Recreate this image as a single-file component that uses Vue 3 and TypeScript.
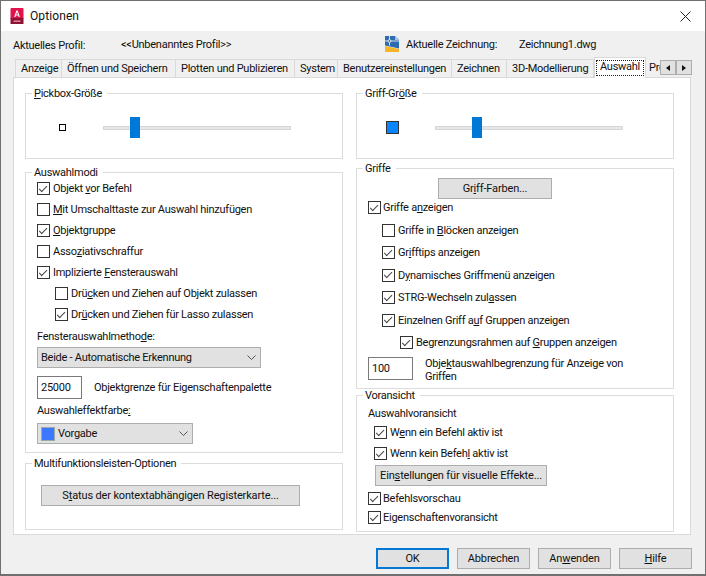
<script setup lang="ts">
const tabs: string[] = ['Anzeige', 'Öffnen und Speichern', 'Plotten und Publizieren', 'System', 'Benutzereinstellungen', 'Zeichnen', '3D-Modellierung']
</script>

<template>
  <div class="win">
    <header class="title">
      <svg class="appicon" width="14" height="16" viewBox="0 0 14 16">
        <rect x="0.5" y="0" width="13" height="11" rx="1" fill="#e0134a" />
        <rect x="0.5" y="10" width="13" height="6" fill="#8e1233" />
        <path d="M4.2 9 L6.4 2.5 H7.7 L9.9 9 H8.6 L8.2 7.6 H5.9 L5.5 9 Z M6.2 6.6 H7.9 L7.05 3.9 Z" fill="#fff" />
        <rect x="3.5" y="12.5" width="7" height="1.4" fill="#e58aa3" />
      </svg>
      <span class="title-text">Optionen</span>
      <svg class="close" width="11" height="11" viewBox="0 0 11 11">
        <path d="M0.5 0.5 L10.5 10.5 M10.5 0.5 L0.5 10.5" stroke="#222" stroke-width="1" fill="none" />
      </svg>
    </header>

    <div class="body">
      <div class="profile">
        <span class="p-label">Aktuelles Profil:</span>
        <span class="p-name">&lt;&lt;Unbenanntes Profil&gt;&gt;</span>
        <svg class="dwgicon" width="14" height="16" viewBox="0 0 14 16">
          <path d="M0 0 H10 L14 4 V12.5 L0 9.5 Z" fill="#2f6bb0" />
          <path d="M10 0 L14 4 H10 Z" fill="#a9c4e0" />
          <path d="M0 10 L14 13 V16 H0 Z" fill="#f6b42a" />
          <path d="M0 5 H14 M4.5 0 V9.5" stroke="#e6eef7" stroke-width="0.9" />
          <circle cx="4.5" cy="5" r="1.4" fill="#2f6bb0" stroke="#fff" stroke-width="0.8" />
        </svg>
        <span class="d-label">Aktuelle Zeichnung:</span>
        <span class="d-name">Zeichnung1.dwg</span>
      </div>

      <div class="tabbar">
        <div class="tabstrip">
          <div v-for="t in tabs" :key="t" class="tab">{{ t }}</div>
          <div class="tab active"><span class="focus">Auswahl</span></div>
          <div class="tab">Profile</div>
        </div>
        <div class="scroller">
          <div class="sbtn"><span class="tri tri-l"></span></div>
          <div class="sbtn"><span class="tri tri-r"></span></div>
        </div>
      </div>

      <main class="panel">
        <div class="col">
          <section class="group g-slider">
            <div class="legend"><u>P</u>ickbox-Größe</div>
            <div class="slider-row">
              <div class="pickbox"></div>
              <div class="track track-l"><div class="thumb th-l"></div></div>
            </div>
          </section>

          <section class="group g-modi">
            <div class="legend">Auswahlmodi</div>
            <label class="row"><span class="cb on"></span><span>Objekt <u>v</u>or Befehl</span></label>
            <label class="row"><span class="cb"></span><span><u>M</u>it Umschalttaste zur Auswahl hinzufügen</span></label>
            <label class="row"><span class="cb on"></span><span><u>O</u>bjektgruppe</span></label>
            <label class="row"><span class="cb"></span><span>Asso<u>z</u>iativschraffur</span></label>
            <label class="row"><span class="cb on"></span><span>Implizierte <u>F</u>ensterauswahl</span></label>
            <label class="row in1"><span class="cb"></span><span>Drü<u>c</u>ken und Ziehen auf Objekt zulassen</span></label>
            <label class="row in1"><span class="cb on"></span><span>Dr<u>ü</u>cken und Ziehen für Lasso zulassen</span></label>
            <div class="lbl lbl-m">Fensterauswahlmetho<u>d</u>e:</div>
            <div class="select sel-m"><span>Beide - Automatische Erkennung</span>
              <svg class="chev" width="9" height="5" viewBox="0 0 9 5"><path d="M0.5 0.5 L4.5 4.5 L8.5 0.5" fill="none" stroke="#555" /></svg>
            </div>
            <div class="field-row">
              <div class="input">25000</div>
              <span class="field-text">Objektgrenze für Eigenschaftenpalette</span>
            </div>
            <div class="lbl lbl-c">Auswahleffektfarbe<u>:</u></div>
            <div class="select sel-c"><span class="swatch"></span><span>Vorgabe</span>
              <svg class="chev" width="9" height="5" viewBox="0 0 9 5"><path d="M0.5 0.5 L4.5 4.5 L8.5 0.5" fill="none" stroke="#555" /></svg>
            </div>
          </section>

          <section class="group g-multi">
            <div class="legend">Multifunktionsleisten-Optionen</div>
            <button class="btn b-status">S<u>t</u>atus der kontextabhängigen Registerkarte...</button>
          </section>
        </div>

        <div class="col col-r">
          <section class="group g-slider">
            <div class="legend">Griff-Gr<u>ö</u>ße</div>
            <div class="slider-row">
              <div class="gripbox"></div>
              <div class="track track-r"><div class="thumb th-r"></div></div>
            </div>
          </section>

          <section class="group g-griffe">
            <div class="legend">Griffe</div>
            <button class="btn b-colors">Gr<u>i</u>ff-Farben...</button>
            <label class="row row-top"><span class="cb on"></span><span>Griffe a<u>n</u>zeigen</span></label>
            <label class="row sub"><span class="cb"></span><span>Griffe in <u>B</u>löcken anzeigen</span></label>
            <label class="row sub"><span class="cb on"></span><span>Gr<u>i</u>fftips anzeigen</span></label>
            <label class="row sub"><span class="cb on"></span><span>D<u>y</u>namisches Griffmenü anzeigen</span></label>
            <label class="row sub"><span class="cb on"></span><span>STRG-Wechseln zul<u>a</u>ssen</span></label>
            <label class="row sub"><span class="cb on"></span><span>Einzelnen Griff a<u>u</u>f Gruppen anzeigen</span></label>
            <label class="row sub2"><span class="cb on"></span><span>Begrenzungsrahmen auf <u>G</u>ruppen anzeigen</span></label>
            <div class="limit">
              <div class="input">100</div>
              <span class="limit-text">Obje<u>k</u>tauswahlbegrenzung für Anzeige von Griffen</span>
            </div>
          </section>

          <section class="group g-preview">
            <div class="legend">Voransicht</div>
            <div class="lbl lbl-p">Auswahlvoransicht</div>
            <label class="row in-p"><span class="cb on"></span><span>W<u>e</u>nn ein Befehl aktiv ist</span></label>
            <label class="row in-p"><span class="cb on"></span><span>Wenn kein Befeh<u>l</u> aktiv ist</span></label>
            <button class="btn b-fx">Ein<u>s</u>tellungen für visuelle Effekte...</button>
            <label class="row tight first"><span class="cb on"></span><span>Befehlsvorschau</span></label>
            <label class="row tight"><span class="cb on"></span><span>Eigenschaftenvoransicht</span></label>
          </section>
        </div>
      </main>

      <footer class="footer">
        <button class="btn fbtn ok">OK</button>
        <button class="btn fbtn">Abbrechen</button>
        <button class="btn fbtn">An<u>w</u>enden</button>
        <button class="btn fbtn"><u>H</u>ilfe</button>
      </footer>
    </div>
  </div>
</template>

<style>
html, body { margin: 0; background: #f0f0f0; }
</style>

<style scoped>
.win {
  box-sizing: border-box;
  width: 706px;
  height: 576px;
  border: 1px solid #707070;
  border-bottom-width: 2px;
  background: #f0f0f0;
  font-family: Roboto, sans-serif;
  font-size: 11px;
  letter-spacing: -0.26px;
  color: #111;
  overflow: hidden;
  display: flex;
  flex-direction: column;
}
u { text-underline-offset: 1px; }
.title {
  height: 30px;
  flex: none;
  background: #fff;
  display: flex;
  align-items: center;
  padding-left: 9px;
}
.title-text { margin-left: 6px; font-size: 12px; letter-spacing: 0.1px; }
.close { margin-left: auto; margin-right: 14px; }
.body { flex: 1; display: flex; flex-direction: column; min-height: 0; }

.profile { height: 26px; flex: none; display: flex; align-items: center; padding-left: 12px; position: relative; }
.p-label { width: 108px; margin-top: 3px; }
.p-name { width: 264px; }
.d-label { margin-left: 7px; width: 113px; }

.tabbar { height: 20px; flex: none; position: relative; margin-left: 14px; width: 675px; }
.tabstrip { display: flex; width: 645px; height: 21px; overflow: hidden; position: relative; z-index: 1; align-items: flex-end; }
.tab {
  box-sizing: border-box;
  flex: none;
  height: 18px;
  margin-bottom: 1px;
  padding: 0 5px;
  line-height: 18px;
  border: 1px solid #d9d9d9;
  border-bottom: 0;
  border-left: 0;
  background: #f0f0f0;
  white-space: nowrap;
}
.tab:nth-child(1) { width: 47px; border-left: 1px solid #d9d9d9; }
.tab:nth-child(2) { width: 114px; }
.tab:nth-child(3) { width: 119px; }
.tab:nth-child(4) { width: 43px; }
.tab:nth-child(5) { width: 114px; }
.tab:nth-child(6) { width: 55px; }
.tab:nth-child(7) { width: 87px; }
.tab.active {
  width: 52px;
  height: 21px;
  margin-bottom: 0;
  background: #fff;
  border-left: 1px solid #d9d9d9;
  padding: 2px 1px 0;
}
.focus { display: block; height: 16px; line-height: 14px; padding: 0 3px; outline: 1px dotted #222; outline-offset: -1px; text-align: center; }
.tab:nth-child(9) { border: 0; padding-left: 3px; background: #f0f0f0; }
.scroller { position: absolute; z-index: 2; left: 645px; top: 3px; display: flex; }
.sbtn {
  box-sizing: border-box;
  width: 16px;
  height: 15px;
  border: 1px solid #adadad;
  background: #e1e1e1;
  display: flex;
  align-items: center;
  justify-content: center;
}
.tri { width: 0; height: 0; border-top: 3.5px solid transparent; border-bottom: 3.5px solid transparent; }
.tri-l { border-right: 4px solid #111; }
.tri-r { border-left: 4px solid #111; }

.panel {
  box-sizing: border-box;
  margin-left: 12px;
  width: 678px;
  height: 458px;
  flex: none;
  background: #fff;
  border: 1px solid #d9d9d9;
  padding: 15px 0 0 11px;
  display: flex;
  gap: 13px;
}
.col { width: 318px; display: flex; flex-direction: column; }
.group {
  box-sizing: border-box;
  border: 1px solid #dcdcdc;
  flex: none;
  position: relative;
}
.legend {
  position: absolute;
  top: -7px;
  left: 6px;
  height: 14px;
  line-height: 14px;
  padding: 0 5px 0 2px;
  background: #fff;
  white-space: nowrap;
}
.g-slider { height: 66px; padding-top: 23px; }
.g-modi { height: 281px; margin-top: 13px; padding: 5px 0 0 11px; }
.g-multi { height: 67px; margin-top: 10px; padding: 21px 0 0 15px; }
.g-griffe { height: 221px; margin-top: 9px; padding: 9px 0 0 11px; }
.g-preview { height: 137px; margin-top: 6px; padding: 7px 0 0 11px; }

.slider-row { display: flex; align-items: flex-start; }
.pickbox { box-sizing: border-box; width: 7px; height: 7px; border: 1px solid #000; background: #fff; margin: 7px 0 0 33px; }
.gripbox { box-sizing: border-box; width: 13px; height: 13px; border: 1px solid #333; background: #0a84ff; margin: 4px 0 0 29px; }
.track {
  width: 188px;
  height: 4px;
  margin-top: 9px;
  background: #e7e7e7;
  box-shadow: inset 0 0 0 1px #d6d6d6;
  display: flex;
  align-items: flex-start;
}
.track-l { margin-left: 37px; }
.track-r { margin-left: 36px; }
.thumb { width: 10px; height: 21px; margin-top: -9px; background: #0078d7; }
.th-l { margin-left: 27px; }
.th-r { margin-left: 37px; }

.row { display: flex; align-items: center; height: 21px; white-space: nowrap; }
.in1 { padding-left: 18px; }
.cb {
  box-sizing: border-box;
  width: 13px;
  height: 13px;
  flex: none;
  margin-right: 3px;
  background: #fff;
  border: 1px solid #333;
  position: relative;
}
.cb.on::after {
  content: "";
  position: absolute;
  left: 3.4px;
  top: 0.6px;
  width: 3.4px;
  height: 7.2px;
  border: solid #444;
  border-width: 0 1px 1px 0;
  transform: rotate(45deg);
}
.row-top .cb, .tight .cb { margin-right: 2px; }
.lbl { height: 21px; line-height: 21px; }
.lbl-m { margin-top: 1px; }
.select {
  box-sizing: border-box;
  height: 21px;
  background: #e1e1e1;
  border: 1px solid #adadad;
  display: flex;
  align-items: center;
  padding-left: 3px;
}
.sel-m { width: 224px; }
.sel-c { width: 156px; }
.swatch { width: 14px; height: 14px; background: #3b78ff; margin-right: 3px; box-shadow: inset 0 0 0 1px #9aa; }
.chev { margin-left: auto; margin-right: 4px; }
.field-row { display: flex; margin-top: 8px; align-items: center; }
.input {
  box-sizing: border-box;
  width: 45px;
  height: 23px;
  background: #fff;
  border: 1px solid #7a7a7a;
  padding-left: 3px;
  line-height: 21px;
  flex: none;
}
.field-text { margin-left: 12px; }
.lbl-c { height: 24px; line-height: 24px; }

.btn {
  box-sizing: border-box;
  display: block;
  background: #e1e1e1;
  border: 1px solid #adadad;
  font: inherit;
  letter-spacing: -0.15px;
  color: inherit;
  padding: 0;
  text-align: center;
  white-space: nowrap;
}
.b-status { width: 259px; height: 21px; }
.b-colors { width: 114px; height: 21px; margin-left: 70px; }
.row-top { margin-top: -2px; }
.sub { height: 22.5px; padding-left: 14px; }
.row-top + .sub { margin-top: 1px; }
.sub2 { height: 22.5px; padding-left: 32px; }
.limit { display: flex; margin-top: 3px; }
.limit-text { margin-left: 12px; width: 222px; line-height: 13px; white-space: normal; }
.lbl-p { margin-bottom: -2px; }
.in-p { padding-left: 6px; }
.b-fx { width: 172px; height: 21px; margin: 1px 0 0 7px; }
.tight { height: 19px; }
.first { margin-top: 3px; }

.footer { display: flex; gap: 8px; padding: 13px 0 0 375px; }
.fbtn { width: 73px; height: 21px; }
.ok { border: 2px solid #0078d7; }
</style>
